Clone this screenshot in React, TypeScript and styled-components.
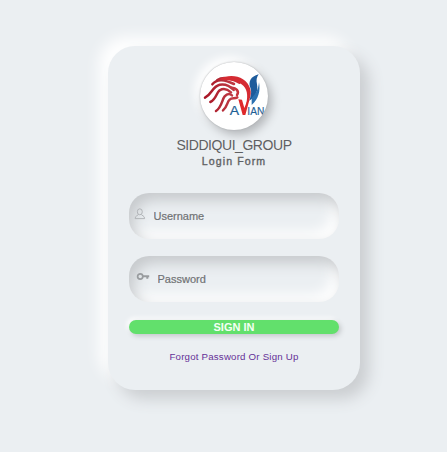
import React from "react";
import styled, { createGlobalStyle } from "styled-components";

const GlobalStyle = createGlobalStyle`
  * { box-sizing: border-box; }
  body {
    margin: 0;
    background: #ebeff2;
    font-family: "Liberation Sans", Arial, sans-serif;
  }
`;

const Page = styled.main`
  min-height: 452px;
  padding: 46px 0 0 108px;
`;

const Card = styled.form`
  display: flex;
  flex-direction: column;
  align-items: center;
  width: 252px;
  height: 344px;
  padding: 16px 21px 0;
  border-radius: 27px;
  background: #ebeff2;
  box-shadow: 9px 9px 15px #cbced1, -9px -9px 15px #ffffff;
`;

const Logo = styled.div`
  width: 68px;
  height: 68px;
  border-radius: 50%;
  overflow: hidden;
  background: #ffffff;
  box-shadow: 0 0 1.5px #a0a3a6, 4px 5px 10px #b4b7ba,
    -5px -5px 10px #ffffff;

  svg { display: block; }
`;

const Title = styled.h1`
  margin: 7px 0 0;
  font-size: 14px;
  line-height: 16px;
  font-weight: 400;
  letter-spacing: -0.45px;
  color: #5f6062;
`;

const Subtitle = styled.h2`
  margin: 1px 0 0;
  font-size: 10.6px;
  line-height: 14px;
  font-weight: 400;
  letter-spacing: 1.1px;
  -webkit-text-stroke: 0.35px #5f6264;
  color: #5f6264;
`;

const Fields = styled.div`
  display: flex;
  flex-direction: column;
  gap: 17px;
  width: 210px;
  margin-top: 25px;
`;

const Field = styled.label<{ $gap: number; $inset: number }>`
  display: flex;
  align-items: center;
  gap: ${(p) => p.$gap}px;
  height: 46px;
  padding-left: ${(p) => p.$inset}px;
  border-radius: 20px;
  box-shadow: inset 5px 7px 14px #c6c9cc, inset -7px -7px 14px #ffffff;

  svg { flex: none; margin-top: -5px; }
`;

const Input = styled.input`
  width: 150px;
  padding: 0;
  border: 0;
  outline: 0;
  background: transparent;
  font: 11px "Liberation Sans", Arial, sans-serif;
  color: #555;

  &::placeholder {
    color: #707274;
    opacity: 1;
    -webkit-text-stroke: 0.2px #707274;
  }
`;

const SignIn = styled.button`
  width: 210px;
  height: 14px;
  margin-top: 18px;
  padding: 0;
  border: 0;
  border-radius: 7px;
  background: #62e06c;
  box-shadow: 2px 2px 5px #c2c6c9, -2px -2px 5px #ffffff;
  color: #f4fff4;
  font: 700 11px/14px "Liberation Sans", Arial, sans-serif;
`;

const Links = styled.a`
  margin-top: 17px;
  font-size: 9.7px;
  line-height: 12px;
  letter-spacing: 0.2px;
  color: #653097;
  white-space: nowrap;
`;

const AvianLogo = () => (
  <svg width="68" height="68" viewBox="32 38 204 204">
    <defs>
      <linearGradient id="mane" gradientUnits="userSpaceOnUse" x1="45" y1="0" x2="182" y2="0">
        <stop offset="0" stopColor="#a81424" />
        <stop offset="0.6" stopColor="#bd3a44" />
        <stop offset="1" stopColor="#e0282b" />
      </linearGradient>
    </defs>
    <g fill="none" stroke="url(#mane)" strokeLinecap="round" strokeWidth="7.5">
      <path d="M69 105C84 85 108 92 134 104" />
      <path d="M84 92C103 80 127 88 150 100" />
      <path d="M47 145C68 135 68 112 91 106C109 103 122 110 133 122" />
      <path d="M63 158C81 150 80 132 91 123C103 116 114 119 125 129" />
      <path d="M80 185C97 174 98 151 106 141C113 133 121 132 128 138" />
      <path d="M101 183C116 170 112 159 121 151C128 145 136 149 144 144" />
      <path d="M126 115C140 114 151 126 143 137" />
    </g>
    <path d="M88 91C121 70 171 79 183 119C188 139 179 157 169 169C175 147 177 124 162 109C144 92 111 91 88 91Z" fill="#d52b33" />
    <path d="M147 150L158 151L165 176L174 154L181 149L168 197H160Z" fill="#df292b" />
    <path d="M208 75C184 81 176 98 183 115C188 127 184 142 180 154C200 142 207 123 203 105C200 92 202 84 208 75Z" fill="#1e5c9c" />
    <path d="M209 99C207 122 198 135 187 146L187 167C207 150 214 126 209 99Z" fill="#2b70b0" />
    <text x="121" y="197" fontFamily="Liberation Sans, Arial, sans-serif" fontSize="38" fill="#1e6095" stroke="#1e6095" strokeWidth="0.6" textLength="28" lengthAdjust="spacingAndGlyphs">A</text>
    <text x="174" y="196" fontFamily="Liberation Sans, Arial, sans-serif" fontSize="32" fill="#1e6095" stroke="#1e6095" strokeWidth="0.4" textLength="51" lengthAdjust="spacingAndGlyphs">IAN</text>
  </svg>
);

const UserIcon = () => (
  <svg width="12" height="12" viewBox="0 0 12 12" fill="none" stroke="#adb0b3" strokeWidth="0.9">
    <ellipse cx="5.8" cy="3.8" rx="2.5" ry="3" />
    <path d="M4.3 6.4C4.2 7.8 1.1 7.4 1.1 10.6H10.6C10.6 7.4 7.5 7.8 7.4 6.4" />
  </svg>
);

const KeyIcon = () => (
  <svg width="14" height="9" viewBox="0 0 14 9" fill="none" stroke="#999c9f">
    <circle cx="4.2" cy="4.5" r="2.6" strokeWidth="1.7" />
    <path d="M7 4.3H13.2M11.3 4.3V6.8" strokeWidth="2" />
  </svg>
);

export default function App() {
  return (
    <>
      <GlobalStyle />
      <Page>
        <Card>
          <Logo><AvianLogo /></Logo>
          <Title>SIDDIQUI_GROUP</Title>
          <Subtitle>Login Form</Subtitle>
          <Fields>
            <Field $gap={7.5} $inset={5}>
              <UserIcon />
              <Input type="text" placeholder="Username" aria-label="Username" />
            </Field>
            <Field $gap={7.5} $inset={7}>
              <KeyIcon />
              <Input type="password" placeholder="Password" aria-label="Password" />
            </Field>
          </Fields>
          <SignIn type="button">SIGN IN</SignIn>
          <Links>Forgot Password Or Sign Up</Links>
        </Card>
      </Page>
    </>
  );
}
